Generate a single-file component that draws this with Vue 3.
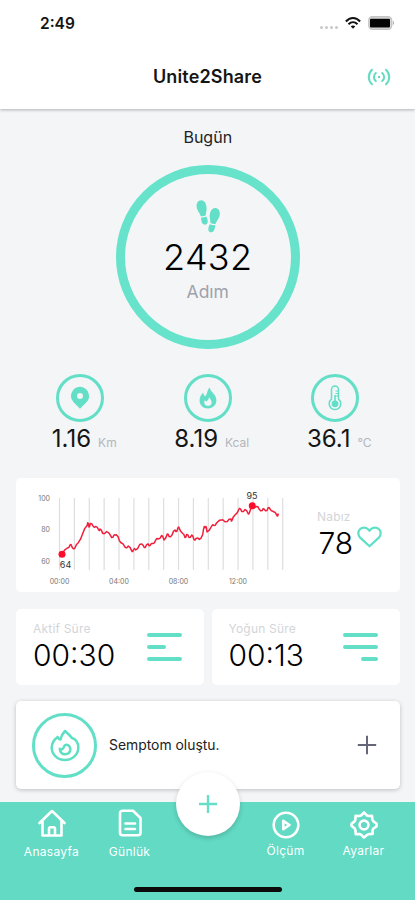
<script setup>
const stats = [
  { icon: 'pin', value: '1.16', unit: 'Km' },
  { icon: 'flame', value: '8.19', unit: 'Kcal' },
  { icon: 'temp', value: '36.1', unit: '°C' },
]

const durations = [
  { label: 'Aktif Süre', value: '00:30', bars: 'left' },
  { label: 'Yoğun Süre', value: '00:13', bars: 'right' },
]

// Heart-rate samples in chart units
const pulse = [
  [46, 76], [51.5, 70], [54.3, 66.5], [56, 69], [58.7, 70.5], [62.3, 64.7], [66.7, 55.5], [70.7, 48],
  [71.7, 44.7], [73, 49], [74.3, 45.5], [77, 48], [79.5, 48.5], [82.7, 52], [84, 51], [86.7, 55.5], [90.7, 53.5],
  [95.7, 59.5], [98, 57], [102, 58.5], [104.7, 64.5], [109.3, 69.5], [112.3, 68], [116, 73.5],
  [117.5, 71.5], [119.7, 72], [123.7, 66.5], [127.3, 67.5], [129.3, 69.5], [132, 65.8], [134, 67.5], [137, 65.5],
  [139.7, 62], [142, 61], [145.7, 57.5], [148, 62], [151.3, 56], [153, 58.5], [156, 57], [159, 52], [161, 53], [162.7, 49],
  [166.7, 55.5], [169, 59.5], [170.7, 56.5], [173, 59.5], [175.7, 57], [178, 61.5], [180, 60.5], [183.3, 61.5], [186.7, 56.5],
  [188.3, 48.5], [190, 48.5], [191, 54], [195.7, 48], [198, 47.5], [200.7, 44.7], [206.7, 41.8], [211.3, 43.5], [215, 41],
  [215.7, 43], [219, 37], [223.3, 30.5], [225.7, 33.5], [229, 31.5], [232.3, 36], [234, 33], [236.3, 28],
  [240.7, 28.5], [243, 31], [246.3, 32.5], [248, 31], [251, 32.5], [253, 29.5], [257.3, 33.5], [261.3, 38], [262.3, 35.5],
]

// Adds the fine ripple between neighbouring samples
const line = pulse
  .flatMap(([x, y], i) => {
    const next = pulse[i + 1]
    if (!next) return [`${x},${y}`]
    const ripple = i % 2 ? 1.1 : -1.1
    return [`${x},${y}`, `${(x + next[0]) / 2},${(y + next[1]) / 2 + ripple}`]
  })
  .join(' ')

const grid = Array.from({ length: 16 }, (_, i) => 43.5 + i * 14.88)
const times = ['00:00', '04:00', '08:00', '12:00']
</script>

<template>
  <div class="screen">
    <header class="top">
      <div class="status">
        <span class="clock">2:49</span>
        <div class="indicators">
          <span class="dots"><i v-for="n in 4" :key="n"></i></span>
          <svg width="16" height="12" viewBox="0 0 16 12" fill="none" stroke="#111" stroke-width="2">
            <path d="M.9 4.500C5-.1 11-.1 15.100 4.500" />
            <path d="M3.500 7.200c2.700-2.700 6.300-2.700 9 0" />
            <path d="M8 11.700 5.700 9.300c1.300-1.200 3.300-1.200 4.600 0z" fill="#111" stroke="none" />
          </svg>
          <svg width="27" height="14" viewBox="0 0 27 14">
            <rect x=".8" y=".8" width="22.800" height="12.400" rx="3.500" fill="#ddd" stroke="#c4c4c4" stroke-width="1.400" />
            <rect x="2" y="2.800" width="20" height="8.600" rx="1" fill="#050505" />
            <path d="M24.800 4.600q2.400 2.400 0 4.800z" fill="#aaa" />
          </svg>
        </div>
      </div>
      <div class="titlebar">
        <h1>Unite2Share</h1>
        <svg class="signal" width="24" height="18" viewBox="0 0 24 18" fill="none" stroke="#62dcc3" stroke-width="2" stroke-linecap="round">
          <path d="M5 1.700c-4.300 4-4.300 10.600 0 14.600M19 1.700c4.300 4 4.300 10.600 0 14.600" />
          <path d="M8.800 5c-2.600 2.300-2.600 5.700 0 8M15.200 5c2.600 2.300 2.600 5.700 0 8" />
          <circle cx="12" cy="9" r="1.200" fill="#62dcc3" stroke="none" />
        </svg>
      </div>
    </header>

    <main>
      <h2>Bugün</h2>
      <section class="ring">
        <svg width="24" height="33" viewBox="0 0 24 33" fill="#62dfc6">
          <path d="M5.300.3C8.500.2 10.700 4.200 10.600 8.500c0 2.600-.8 4.500-.8 6.700-1.300.9-3.200 1.200-4.900 1C3.700 12.800.7 10.300.6 6.300.5 3 2.200.4 5.300.3z" />
          <path d="M5.100 17.500c1.900.3 3.700-.2 5.200-.9 1.200 2.200 1.700 4.300 1.300 6-.6 2.500-3.700 2.800-5.100 1-1.100-1.300-1.300-3.900-1.400-6.100z" />
          <path d="M19.200 8c3.200.2 4.900 3 4.600 6.500-.4 3.900-3.200 6.300-4.400 9.500-1.700.2-3.500-.1-4.900-1-.1-2.200-.8-4.100-.8-6.700C13.700 11.800 16 7.800 19.200 8z" />
          <path d="M13.800 24.200c1.700.8 3.500 1.100 5.400.9-.1 2.400-.5 4.600-1.700 6.100-1.500 1.800-4.700 1.300-5.100-1.200-.3-1.800.3-3.500 1.400-5.800z" />
        </svg>
        <strong>2432</strong>
        <span>Adım</span>
      </section>

      <section class="stats">
        <div v-for="s in stats" :key="s.icon" class="stat">
          <div class="badge">
            <svg v-if="s.icon === 'pin'" width="20" height="24" viewBox="0 0 20 24" fill="#62dfc6">
              <path fill-rule="evenodd" d="M10 .8a9.100 9.100 0 0 1 9.100 9.100c0 2.400-1 4.600-2.700 6.300L10 22.800l-6.400-6.600A9.100 9.100 0 0 1 10 .8zm0 6.100a3 3 0 1 0 0 6 3 3 0 0 0 0-6z" />
            </svg>
            <svg v-else-if="s.icon === 'flame'" width="18" height="22" viewBox="0 0 18 22" fill="#62dfc6">
              <path fill-rule="evenodd" d="M10.800.5c.5 4.900 6.600 6.600 6.600 12.800 0 4.700-3.600 8.200-8.400 8.200S.6 18.200.6 13.500c0-3.400 1.500-6 3.600-8.100.2 1.700.8 3 1.800 3.900C8.600 7.400 7.700 3.200 10.800.5zM10 9.800c0 2.300-1 3.600-2.700 4.600-.7-.3-1.200-.8-1.500-1.500-1.200 2.500-.5 5.900 3.200 5.900 2.300 0 3.700-1.400 3.700-3.400 0-2.500-2.100-3.100-2.700-5.600z" />
            </svg>
            <svg v-else width="14" height="26" viewBox="0 0 14 26" fill="none" stroke="#62dfc6">
              <path stroke-width="1.500" d="M3.500 14.200V4.500a3.500 3.500 0 0 1 7 0v9.700a5.800 5.800 0 1 1-7 0z" />
              <circle cx="7" cy="18.800" r="3.400" fill="#62dfc6" stroke="none" />
              <path stroke-width="1.600" d="M7 18.500V10" />
              <path stroke-width="1" d="M7.500 6h3M7.500 8.500h3M7.500 11h3" />
            </svg>
          </div>
          <p><b>{{ s.value }}</b><small>{{ s.unit }}</small></p>
        </div>
      </section>

      <section class="card pulse">
        <svg class="chart" width="284" height="114" viewBox="0 0 284 114">
          <g stroke="#dedede" stroke-width="1.200">
            <line v-for="(x, i) in grid" :key="i" :x1="x" :x2="x" y1="20" y2="92" />
          </g>
          <polyline :points="line" fill="none" stroke="#f0203c" stroke-width="1.500" stroke-linejoin="round" />
          <circle cx="46" cy="76.300" r="3.500" fill="#fb0d2b" />
          <circle cx="236.300" cy="27.700" r="3.500" fill="#fb0d2b" />
          <g class="axis" text-anchor="end">
            <text x="34" y="22.700">100</text>
            <text x="34" y="54.200">80</text>
            <text x="34" y="85.700">60</text>
          </g>
          <g class="axis" text-anchor="middle">
            <text v-for="(t, i) in times" :key="t" :x="43.5 + i * 59.5" y="105.500">{{ t }}</text>
          </g>
          <g class="mark" text-anchor="middle">
            <text x="49.500" y="89.500">64</text>
            <text x="236" y="20.500">95</text>
          </g>
        </svg>
        <div class="rate">
          <span class="label">Nabız</span>
          <div class="rate-row">
            <strong>78</strong>
            <svg width="25" height="22" viewBox="0 0 26 23" fill="none" stroke="#5de0c5" stroke-width="2.300" stroke-linejoin="round">
              <path d="M13 21.200 3.200 12.200C.7 9.600.7 5.700 3 3.400c2.400-2.400 6.200-2.400 8.500 0L13 5l1.500-1.600c2.300-2.400 6.100-2.400 8.500 0 2.300 2.300 2.300 6.200-.2 8.800z" />
            </svg>
          </div>
        </div>
      </section>

      <section class="durations">
        <div v-for="d in durations" :key="d.label" class="card duration">
          <div>
            <span class="label">{{ d.label }}</span>
            <strong>{{ d.value }}</strong>
          </div>
          <div class="bars" :class="d.bars"><i></i><i></i><i></i></div>
        </div>
      </section>

      <section class="card symptom">
        <div class="badge large">
          <svg width="30" height="33" viewBox="0 0 30 33" fill="none" stroke="#5ddfc4" stroke-width="2.500" stroke-linejoin="round" stroke-linecap="round">
            <path d="M15 2c-2.300 2.300-3.700 4.600-4.500 8.500C9.300 10.400 8.200 9.500 7.600 8 4.200 10.600 1.700 14.200 1.700 18.500 1.700 25.500 7.500 31 15 31s13.300-5.500 13.300-12.500c0-4.800-2.800-8.400-6.600-9.700C20 6.200 17.500 4.300 15 2z" />
            <path d="M9.800 19.800c2.100 1 4.100 0 4.200-2.500 1.300-2.100 3-1.900 4.300-1 2.700 1.900 2.700 5.500.6 7.600-2.100 2.100-5.600 1.800-7.500-.1-.9-1-1.500-2.400-1.600-4z" />
          </svg>
        </div>
        <span class="message">Semptom oluştu.</span>
        <svg width="20" height="20" viewBox="0 0 20 20" stroke="#656779" stroke-width="2">
          <path d="M10 .8v18.400M.8 10h18.400" />
        </svg>
      </section>
    </main>

    <nav>
      <div class="tabs">
        <a class="tab home">
          <svg width="28" height="28" viewBox="0 0 28 28">
            <path d="M1.500 14 14 2l12.500 12M4.500 12.500v14h19v-14M11 26v-6.200q0-1.500 1.500-1.500h3q1.500 0 1.500 1.500V26" />
          </svg>
          <span>Anasayfa</span>
        </a>
        <a class="tab diary">
          <svg width="28" height="28" viewBox="0 0 28 28">
            <path d="M6.500 1.700H17L24.500 9v14.800a2.500 2.500 0 0 1-2.500 2.500H6.500A2.500 2.500 0 0 1 4 23.800V4.200a2.500 2.500 0 0 1 2.500-2.500zM9.500 14.500h9.500M9.500 20h9.500" />
          </svg>
          <span>Günlük</span>
        </a>
        <button class="fab" aria-label="+">
          <svg width="18" height="18" viewBox="0 0 18 18" stroke="#62dfc6" stroke-width="2.300">
            <path d="M9 0v18M0 9h18" />
          </svg>
        </button>
        <a class="tab measure">
          <svg width="28" height="28" viewBox="0 0 28 28">
            <circle cx="14" cy="14" r="12.300" />
            <path d="M11.300 9.800v8.400L17.500 14z" />
          </svg>
          <span>Ölçüm</span>
        </a>
        <a class="tab settings">
          <svg width="28" height="28" viewBox="0 0 28 28">
            <path d="M11.500 4.200 14 1.500l2.500 2.700 1.800.8 3.700-.2.400 3.700 1 1.900 3.100 2.100V15.500l-3.100 2-.9 1.900.1 3.500-3.700.2-1.900.8L14 26.500l-2.700-2.700-2-.8-3.600.1-.2-3.700-.8-1.900L1.500 14.800v-2l3.100-2.400.8-1.900.2-3.700 3.800.2z" />
            <circle cx="14" cy="14" r="4.400" />
          </svg>
          <span>Ayarlar</span>
        </a>
      </div>
      <div class="grabber"></div>
    </nav>
  </div>
</template>

<style>
body {
  background: #f3f5f7;
}
</style>

<style scoped>
.screen {
  width: 415px;
  height: 900px;
  display: flex;
  flex-direction: column;
  overflow: hidden;
  background: #f3f5f7;
  color: #151515;
  font-family: Inter, "Liberation Sans", sans-serif;
}
svg {
  display: block;
  flex: none;
}
h1, h2, p {
  margin: 0;
}
.top {
  height: 109px;
  background: #fff;
  box-shadow: 0 1px 3px rgba(0, 0, 0, 0.28);
}
.status {
  height: 46px;
  padding: 0 20px 0 40px;
  display: flex;
  align-items: center;
  justify-content: space-between;
}
.clock {
  font-size: 15.500px;
  font-weight: 600;
}
.indicators {
  display: flex;
  align-items: center;
  gap: 7px;
}
.dots {
  display: flex;
  gap: 2px;
  padding-top: 8px;
}
.dots i {
  width: 3px;
  height: 3px;
  border-radius: 50%;
  background: #c8c8c8;
}
.titlebar {
  height: 61px;
  padding: 0 24px;
  display: grid;
  grid-template-columns: 24px 1fr 24px;
  align-items: center;
}
h1 {
  grid-column: 2;
  text-align: center;
  font-size: 18px;
  font-weight: 600;
  letter-spacing: 0.150px;
}
main {
  flex: none;
  height: 693px;
  padding: 0 15.500px 0 16px;
  box-sizing: border-box;
}
h2 {
  padding-top: 18px;
  height: 38px;
  line-height: 20px;
  text-align: center;
  font-size: 16px;
  font-weight: 400;
  color: #222;
}
.ring {
  width: 184px;
  height: 184px;
  margin: 0 auto;
  box-sizing: border-box;
  border: 9px solid #66e3ca;
  border-radius: 50%;
  display: flex;
  flex-direction: column;
  align-items: center;
  padding-top: 26px;
}
.ring strong {
  margin-top: 2px;
  font-size: 36px;
  line-height: 44px;
  font-weight: 350;
  letter-spacing: 0.300px;
  color: #000;
}
.ring span {
  margin-top: 2px;
  font-size: 17.500px;
  line-height: 22px;
  color: #a0a2ab;
}
.stats {
  padding-top: 24.500px;
  display: grid;
  grid-template-columns: repeat(3, 127.500px);
  justify-content: center;
}
.stat {
  display: flex;
  flex-direction: column;
  align-items: center;
}
.badge {
  width: 48px;
  height: 48px;
  flex: none;
  box-sizing: border-box;
  border: 3px solid #62dfc6;
  border-radius: 50%;
  display: flex;
  align-items: center;
  justify-content: center;
}
.stat p {
  height: 32px;
  line-height: 34px;
  padding-left: 8px;
  white-space: nowrap;
}
.stat b {
  font-size: 24px;
  font-weight: 400;
}
.stat small {
  margin-left: 7px;
  font-size: 12px;
  color: #b3b5bb;
}
.card {
  background: #fff;
  border-radius: 5px;
}
.label {
  display: block;
  font-size: 12px;
  line-height: 16px;
  letter-spacing: 0.200px;
  color: #d3d5d9;
}
.pulse {
  height: 114px;
  margin-top: 24.500px;
  display: flex;
}
.axis {
  font-size: 7px;
  fill: #777;
}
.mark {
  font-size: 9px;
  fill: #333;
}
.rate {
  padding: 31px 0 0 17px;
}
.rate-row {
  display: flex;
  gap: 4px;
  padding-left: 1.500px;
}
.rate strong,
.duration strong {
  display: block;
  font-size: 30px;
  line-height: 36px;
  font-weight: 350;
  color: #000;
}
.rate-row svg {
  margin-top: 1px;
}
.durations {
  margin-top: 16.500px;
  display: grid;
  grid-template-columns: 1fr 1fr;
  gap: 7.500px;
}
.duration {
  height: 76px;
  box-sizing: border-box;
  padding: 12px 22px 0 17px;
  display: flex;
  justify-content: space-between;
}
.bars {
  width: 35px;
  padding-top: 12px;
  display: flex;
  flex-direction: column;
  gap: 8px;
}
.bars i {
  height: 4px;
  border-radius: 2px;
  background: #62dfc6;
}
.bars.left i:nth-child(2) {
  width: 19px;
}
.bars.right i:nth-child(3) {
  width: 17px;
  align-self: flex-end;
}
.symptom {
  height: 88px;
  margin-top: 16.500px;
  padding: 0 23px 0 16px;
  display: flex;
  align-items: center;
  box-shadow: 0 1px 4px rgba(0, 0, 0, 0.22);
}
.badge.large {
  width: 65px;
  height: 65px;
  border-width: 3.500px;
}
.message {
  flex: 1;
  padding-left: 12px;
  font-size: 13.900px;
  color: #222;
}
nav {
  height: 98px;
  background: #62dac4;
}
.tabs {
  height: 85px;
  display: flex;
  justify-content: center;
}
.tab {
  width: 78px;
  padding-top: 7px;
  display: flex;
  flex-direction: column;
  align-items: center;
  font-size: 12px;
  color: #fff;
}
.tab span {
  margin-top: 7px;
  line-height: 16px;
  letter-spacing: 0.300px;
}
.tab svg {
  fill: none;
  stroke: #fff;
  stroke-width: 2.600;
  stroke-linejoin: round;
  stroke-linecap: round;
}
.measure,
.settings {
  padding-top: 9px;
}
.measure span,
.settings span {
  margin-top: 4px;
}
.fab {
  width: 64px;
  height: 64px;
  margin: -30px 7px 0;
  padding: 0;
  border: 0;
  border-radius: 50%;
  background: #fff;
  box-shadow: 0 2px 5px rgba(0, 0, 0, 0.18);
  display: flex;
  align-items: center;
  justify-content: center;
}
.grabber {
  width: 148px;
  height: 4.500px;
  margin: 0 auto;
  border-radius: 3px;
  background: #0b0b0b;
}
</style>
